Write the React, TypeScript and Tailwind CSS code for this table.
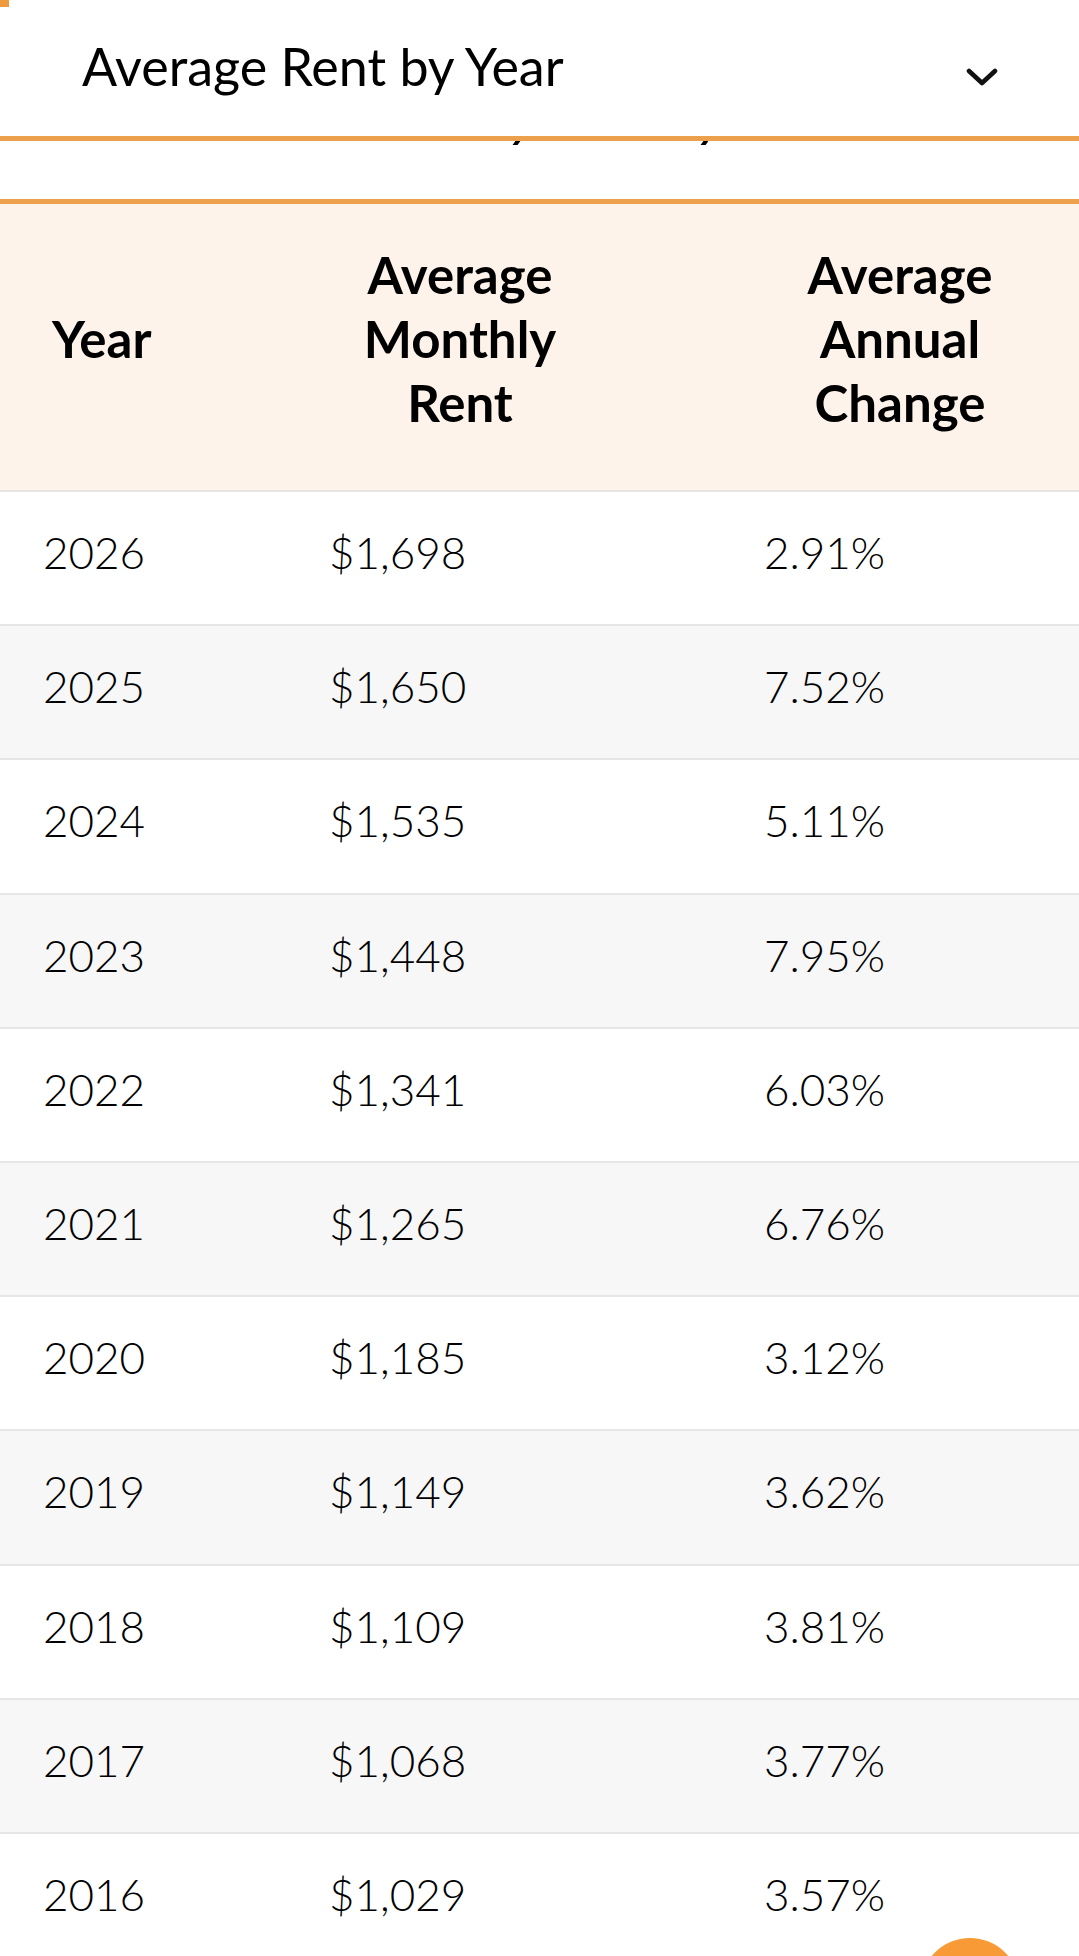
import React from 'react'

interface RentRow {
  year: number
  rent: string
  change: string
}

const rows: RentRow[] = [
  { year: 2026, rent: '$1,698', change: '2.91%' },
  { year: 2025, rent: '$1,650', change: '7.52%' },
  { year: 2024, rent: '$1,535', change: '5.11%' },
  { year: 2023, rent: '$1,448', change: '7.95%' },
  { year: 2022, rent: '$1,341', change: '6.03%' },
  { year: 2021, rent: '$1,265', change: '6.76%' },
  { year: 2020, rent: '$1,185', change: '3.12%' },
  { year: 2019, rent: '$1,149', change: '3.62%' },
  { year: 2018, rent: '$1,109', change: '3.81%' },
  { year: 2017, rent: '$1,068', change: '3.77%' },
  { year: 2016, rent: '$1,029', change: '3.57%' },
]

export default function App() {
  return (
    <div className="relative w-[1079px] h-[1956px] overflow-hidden bg-white text-black font-['Lato',sans-serif]">
      {/* sticky section header */}
      <div className="relative h-[136px] flex items-center justify-between pl-[82px] pr-[81px] pb-[4px]">
        <div className="absolute left-0 top-0 w-[9px] h-[7px] bg-[#f09a3e]" />
        <h2 className="text-[52px] leading-none whitespace-nowrap">Average Rent by Year</h2>
        <svg width="32" height="19" viewBox="0 0 32 19" className="mt-[22px]" fill="none">
          <polyline points="3,3 16,15 29,3" stroke="#111" strokeWidth="4.6" strokeLinecap="round" strokeLinejoin="round" />
        </svg>
      </div>
      <div className="h-[5px] bg-[#eda04c]" />

      {/* heading underneath, mostly scrolled away */}
      <div className="relative h-[58px]">
        <div className="absolute left-[514px] top-0 w-[5px] h-[4px] bg-black -skew-x-[35deg]" />
        <div className="absolute left-[702px] top-0 w-[5px] h-[4px] bg-black -skew-x-[35deg]" />
      </div>
      <div className="h-[5px] bg-[#eda04c]" />

      {/* table */}
      <div className="grid grid-cols-[286px_435px_358px] items-center h-[288px] pt-[39px] pb-[57px] bg-[#fdf3ea] border-b-2 border-[#e6e6e6] text-[51px] leading-[64px] font-bold">
        <div className="pl-[52px]">Year</div>
        <div className="text-center pr-[87px]">
          Average
          <br />
          Monthly
          <br />
          Rent
        </div>
        <div className="text-center">
          Average
          <br />
          Annual
          <br />
          Change
        </div>
      </div>

      {rows.map((row, i) => (
        <div
          key={row.year}
          className={
            'grid grid-cols-[286px_435px_358px] items-center h-[134.2px] pb-[12px] border-b-2 border-[#e6e6e6] text-[44px] leading-none font-light ' +
            (i % 2 === 1 ? 'bg-[#f7f7f7]' : 'bg-white')
          }
        >
          <div className="pl-[43px]">{row.year}</div>
          <div className="pl-[43px]">{row.rent}</div>
          <div className="pl-[43px]">{row.change}</div>
        </div>
      ))}

      {/* floating action button */}
      <div className="absolute left-[920px] top-[1938px] w-[100px] h-[100px] rounded-full bg-[#f89a36]" />
    </div>
  )
}
